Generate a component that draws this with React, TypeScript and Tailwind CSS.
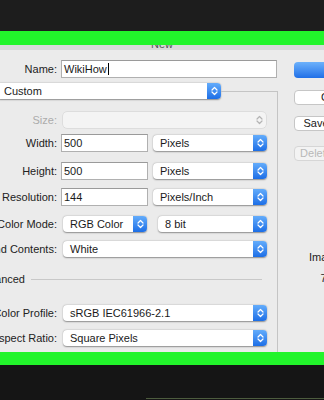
import React from 'react';

const Chevrons: React.FC<{ color?: string }> = ({ color = '#ffffff' }) => (
  <svg width="7" height="10" viewBox="0 0 7 10" fill="none">
    <polyline points="1,4 3.5,1.5 6,4" stroke={color} strokeWidth="1.2" strokeLinecap="round" strokeLinejoin="round" />
    <polyline points="1,6 3.5,8.5 6,6" stroke={color} strokeWidth="1.2" strokeLinecap="round" strokeLinejoin="round" />
  </svg>
);

interface SelectProps {
  value?: string;
  width: string;
  disabled?: boolean;
}

const Select: React.FC<SelectProps> = ({ value, width, disabled }) => (
  <div
    className={`flex h-[16px] ${width} shrink-0 items-center rounded-[4px] ${
      disabled ? 'bg-[#f4f4f4] shadow-[0_0_0_0.5px_rgba(0,0,0,0.12)]' : 'bg-white shadow-[0_0.5px_1.5px_rgba(0,0,0,0.4)]'
    }`}
  >
    <span className="flex-1 truncate pl-[7px] text-[#1a1a1a]">{value}</span>
    {disabled ? (
      <div className="flex h-full w-[14px] items-center justify-center">
        <Chevrons color="#b4b4b4" />
      </div>
    ) : (
      <div className="flex h-full w-[14px] items-center justify-center rounded-r-[4px] bg-gradient-to-b from-[#63acfb] to-[#1c6ee6]">
        <Chevrons />
      </div>
    )}
  </div>
);

const Input: React.FC<{ value: string; width: string; cursor?: boolean }> = ({ value, width, cursor }) => (
  <div className={`flex h-[18px] ${width} shrink-0 items-center border border-[#b0b0b0] border-t-[#9a9a9a] bg-white pl-[2px] text-[#1a1a1a]`}>
    <span>{value}</span>
    {cursor && <span className="ml-[1px] h-[12px] w-px bg-black" />}
  </div>
);

const Label: React.FC<{ text: string; muted?: boolean }> = ({ text, muted }) => (
  <div className={`flex w-[57px] shrink-0 justify-end whitespace-nowrap ${muted ? 'text-[#ababab]' : 'text-[#222]'}`}>
    {text}
  </div>
);

const App: React.FC = () => {
  return (
    <div className="fixed inset-0 h-[400px] w-[324px] overflow-hidden bg-[#1d1d1d] font-['Liberation_Sans',Arial,sans-serif] text-[11px] leading-none">
      <div className="h-[31px] bg-[#1d1d1d]" />
      <div className="h-[14px] w-full bg-[#22f42b]" />
      {/* title strip, text mostly hidden under the green bar */}
      <div className="flex h-[5px] w-full justify-center overflow-hidden bg-[#d9d9d9]">
        <span className="-mt-[6px] text-[#555]">New</span>
      </div>

      {/* dialog body */}
      <div className="flex h-[302px] w-full overflow-hidden bg-[#ebebeb]">
        <div className="flex w-[278px] shrink-0 flex-col">
          <div className="mt-[10px] flex h-[18px] items-center">
            <Label text="Name:" />
            <div className="ml-[4px]">
              <Input value="WikiHow" width="w-[216px]" cursor />
            </div>
          </div>

          <div className="mt-[4px] flex h-[18px]">
            <div className="-ml-[3px] flex items-center">
              <Select value="Custom" width="w-[224px]" />
            </div>
            <div className="mt-[9px] flex-1 border-t border-r border-[#c4c4c4]" />
          </div>

          <div className="flex flex-1 flex-col border-r border-[#c4c4c4]">
            <div className="mt-[11px] flex h-[18px] items-center">
              <Label text="Size:" muted />
              <div className="ml-[6px]">
                <Select width="w-[203px]" disabled />
              </div>
            </div>

            <div className="mt-[5px] flex h-[18px] items-center">
              <Label text="Width:" />
              <div className="ml-[4px]">
                <Input value="500" width="w-[87px]" />
              </div>
              <div className="ml-[5px]">
                <Select value="Pixels" width="w-[114px]" />
              </div>
            </div>

            <div className="mt-[10px] flex h-[18px] items-center">
              <Label text="Height:" />
              <div className="ml-[4px]">
                <Input value="500" width="w-[87px]" />
              </div>
              <div className="ml-[5px]">
                <Select value="Pixels" width="w-[114px]" />
              </div>
            </div>

            <div className="mt-[8px] flex h-[18px] items-center">
              <Label text="Resolution:" />
              <div className="ml-[4px]">
                <Input value="144" width="w-[87px]" />
              </div>
              <div className="ml-[5px]">
                <Select value="Pixels/Inch" width="w-[114px]" />
              </div>
            </div>

            <div className="mt-[9px] flex h-[18px] items-center">
              <Label text="Color Mode:" />
              <div className="ml-[6px]">
                <Select value="RGB Color" width="w-[84px]" />
              </div>
              <div className="ml-[11px]">
                <Select value="8 bit" width="w-[109px]" />
              </div>
            </div>

            <div className="mt-[7px] flex h-[18px] items-center">
              <Label text="Background Contents:" />
              <div className="ml-[6px]">
                <Select value="White" width="w-[204px]" />
              </div>
            </div>

            <div className="mt-[12px] flex h-[18px] items-center">
              <div className="flex w-[25px] shrink-0 justify-end whitespace-nowrap text-[#222]">Advanced</div>
              <div className="ml-[6px] h-px w-[231px] bg-[#c8c8c8]" />
            </div>

            <div className="mt-[16px] flex h-[18px] items-center">
              <Label text="Color Profile:" />
              <div className="ml-[6px]">
                <Select value="sRGB IEC61966-2.1" width="w-[204px]" />
              </div>
            </div>

            <div className="mt-[7px] flex h-[18px] items-center">
              <Label text="Pixel Aspect Ratio:" />
              <div className="ml-[6px]">
                <Select value="Square Pixels" width="w-[204px]" />
              </div>
            </div>
          </div>
        </div>

        {/* right column buttons */}
        <div className="flex w-[88px] shrink-0 flex-col pl-[16px]">
          <div className="mt-[12px] flex h-[16px] w-[88px] items-center justify-center rounded-[4px] bg-gradient-to-b from-[#6cb1fb] to-[#1f6fe7] text-white">
            OK
          </div>
          <div className="mt-[12px] flex h-[15px] w-[88px] items-center justify-center rounded-[4px] border border-[#c6c6c6] bg-white text-[#1a1a1a]">
            Cancel
          </div>
          <div className="mt-[11px] flex h-[15px] w-[88px] items-center justify-center rounded-[4px] border border-[#c6c6c6] bg-white text-[#1a1a1a]">
            Save Preset...
          </div>
          <div className="mt-[15px] flex h-[15px] w-[88px] items-center justify-center rounded-[4px] border border-[#d6d6d6] bg-[#f3f3f3] text-[#b8b8b8]">
            Delete Preset...
          </div>
          <div className="mt-[91px] w-[88px] text-center text-[#222]">Image Size:</div>
          <div className="mt-[10px] w-[88px] text-center text-[#222]">732.4K</div>
        </div>
      </div>

      <div className="h-[13px] w-full bg-[#22f42b]" />
      <div className="h-[35px] w-full bg-[#151515] pt-[33px]">
        <div className="ml-[146px] h-[2px] border-t border-[#4d5c3e]" />
      </div>
    </div>
  );
};

export default App;
